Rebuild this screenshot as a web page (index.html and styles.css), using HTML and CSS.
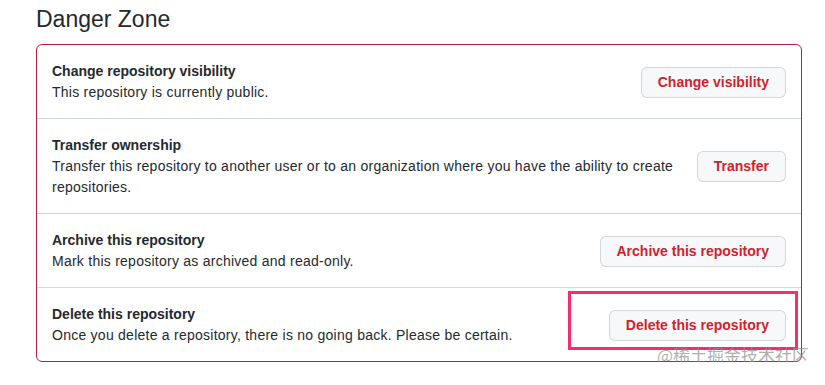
FILE: index.html
```html
<!DOCTYPE html>
<html lang="en">
<head>
    <meta charset="UTF-8">
    <meta name="viewport" content="width=device-width, initial-scale=1.0">
    <title>Danger Zone</title>
    <link rel="stylesheet" href="styles.css">
</head>
<body>

    <div class="page">
        <h2 class="subhead">Danger Zone</h2>

        <div class="danger-box">
            <div class="danger-row">
                <div class="row-text">
                    <strong>Change repository visibility</strong>
                    <p>This repository is currently public.</p>
                </div>
                <button class="btn-danger">Change visibility</button>
            </div>
            <div class="danger-row">
                <div class="row-text">
                    <strong>Transfer ownership</strong>
                    <p>Transfer this repository to another user or to an organization where you have the ability to create repositories.</p>
                </div>
                <button class="btn-danger">Transfer</button>
            </div>
            <div class="danger-row">
                <div class="row-text">
                    <strong>Archive this repository</strong>
                    <p>Mark this repository as archived and read-only.</p>
                </div>
                <button class="btn-danger">Archive this repository</button>
            </div>
            <div class="danger-row">
                <div class="row-text">
                    <strong>Delete this repository</strong>
                    <p>Once you delete a repository, there is no going back. Please be certain.</p>
                </div>
                <button class="btn-danger">Delete this repository</button>
            </div>
        </div>

        <!-- annotation drawn over the screenshot -->
        <div class="highlight"></div>
        <div class="watermark">@稀土掘金技术社区</div>
    </div>

</body>
</html>
```

FILE: styles.css
```css
body {
    margin: 0;
    background-color: #ffffff;
    font-family: "Liberation Sans", Arial, sans-serif;
    color: #24292f;
}
.page {
    position: relative;
    padding: 4px 23px 0 36px;
}
.subhead {
    margin: 0 0 10px 0;
    font-size: 23px;
    font-weight: 400;
    line-height: 30px;
}
.danger-box {
    border: 1px solid #b8203e;
    border-radius: 6px;
}
.danger-row {
    display: flex;
    align-items: center;
    justify-content: space-between;
    gap: 16px;
    padding: 16px 15px 15px 15px;
    border-top: 1px solid #d0d7de;
}
.danger-row:first-child {
    border-top: none;
}
.row-text {
    font-size: 14px;
    line-height: 21px;
}
.row-text strong {
    display: block;
    font-weight: 700;
}
.row-text p {
    margin: 0;
    letter-spacing: 0.25px;
}
.btn-danger {
    flex-shrink: 0;
    padding: 5px 16px;
    font-family: "Liberation Sans", Arial, sans-serif;
    font-size: 14px;
    font-weight: 700;
    line-height: 19px;
    color: #cf222e;
    background-color: #f6f8fa;
    border: 1px solid rgba(27, 31, 36, 0.15);
    border-radius: 6px;
    white-space: nowrap;
    cursor: pointer;
}
.highlight {
    position: absolute;
    left: 568px;
    top: 291px;
    width: 224px;
    height: 53px;
    border: 3px solid #f0306b;
}
.watermark {
    position: absolute;
    left: 657px;
    top: 344px;
    font-family: "Noto Sans CJK SC", sans-serif;
    font-size: 17px;
    line-height: 22px;
    color: rgba(140, 140, 140, 0.7);
}
```
